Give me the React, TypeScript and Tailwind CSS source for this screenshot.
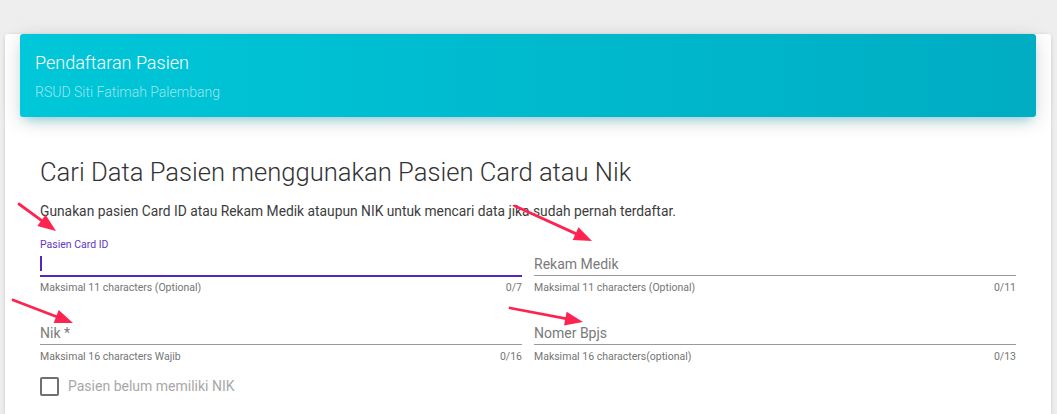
import React from "react";

type Field = {
  label: string;
  hint: string;
  counter: string;
  focused?: boolean;
};

const fields: Field[] = [
  { label: "Pasien Card ID", hint: "Maksimal 11 characters (Optional)", counter: "0/7", focused: true },
  { label: "Rekam Medik", hint: "Maksimal 11 characters (Optional)", counter: "0/11" },
  { label: "Nik *", hint: "Maksimal 16 characters Wajib", counter: "0/16" },
  { label: "Nomer Bpjs", hint: "Maksimal 16 characters(optional)", counter: "0/13" },
];

// annotation arrows: [tailX, tailY, tipX, tipY]
const arrows: [number, number, number, number][] = [
  [19, 204, 56, 231],
  [515, 206, 592, 241],
  [13, 300, 73, 323],
  [510, 308, 583, 322],
];

function Arrow({ a }: { a: [number, number, number, number] }) {
  const [x1, y1, x2, y2] = a;
  const dx = x2 - x1;
  const dy = y2 - y1;
  const len = Math.sqrt(dx * dx + dy * dy);
  const ux = dx / len;
  const uy = dy / len;
  const head = 18;
  const half = 7;
  const bx = x2 - ux * head;
  const by = y2 - uy * head;
  const p1 = `${bx - uy * half},${by + ux * half}`;
  const p2 = `${bx + uy * half},${by - ux * half}`;
  return (
    <g>
      <line x1={x1} y1={y1} x2={bx + ux * 2} y2={by + uy * 2} stroke="#fd2451" strokeWidth={2.8} strokeLinecap="round" />
      <polygon points={`${x2},${y2} ${p1} ${p2}`} fill="#fd2451" />
    </g>
  );
}

function TextField({ f }: { f: Field }) {
  return (
    <div className="flex flex-col h-[69px]">
      <div className="h-[17px] flex items-end pb-[3px]">
        {f.focused && <span className="text-[10.5px] leading-[12px] text-[#6236c6]">{f.label}</span>}
      </div>
      {f.focused ? (
        <div className="h-[23px] border-b-2 border-[#5128c0] flex items-center pb-[2px]">
          <span className="w-[2px] h-[15px] bg-[#5128c0]" />
        </div>
      ) : (
        <div className="h-[22px] border-b border-[#9a9a9a] flex items-center">
          <span className="text-[14px] text-[#7a7a7a]">{f.label}</span>
        </div>
      )}
      <div className={`flex justify-between text-[10.5px] leading-[12px] text-[#757575] ${f.focused ? "pt-[5px]" : "pt-[6px]"}`}>
        <span>{f.hint}</span>
        <span>{f.counter}</span>
      </div>
    </div>
  );
}

export default function App() {
  return (
    <div className="relative min-h-screen bg-[#eeeeee] pt-[54px] pl-[5px] pr-[6px] font-['Roboto',sans-serif]">
      <div className="bg-white rounded-[3px] shadow-[0_1px_4px_0_rgba(0,0,0,0.14)] pb-[20px]">
        <div className="mx-[15px] -mt-[20px] h-[83px] rounded-[3px] px-[15px] pt-[16px] bg-gradient-to-r from-[#00c7d9] to-[#00adc3] shadow-[0_4px_20px_0_rgba(0,0,0,0.14),0_7px_10px_-5px_rgba(0,188,212,0.4)]">
          <h4 className="text-[18px] leading-[25px] font-light text-white">Pendaftaran Pasien</h4>
          <p className="mt-[7px] text-[14px] leading-[20px] font-light text-white/60">RSUD Siti Fatimah Palembang</p>
        </div>

        <div className="px-[35px]">
          <h3 className="mt-[40px] text-[25.6px] leading-[31px] font-light text-[#333333]">
            Cari Data Pasien menggunakan Pasien Card atau Nik
          </h3>
          <p className="mt-[13px] text-[13.8px] leading-[20px] text-[#3c3c3c]">
            Gunakan pasien Card ID atau Rekam Medik ataupun NIK untuk mencari data jika sudah pernah terdaftar.
          </p>

          <div className="mt-[16px] grid grid-cols-2 gap-x-[12px]">
            {fields.map((f) => (
              <TextField key={f.label} f={f} />
            ))}
          </div>

          <label className="mt-[1px] flex items-center gap-[9px]">
            <span className="w-[19px] h-[19px] rounded-[2px] border-2 border-[#707070]" />
            <span className="text-[14px] text-[#a8a8a8]">Pasien belum memiliki NIK</span>
          </label>
        </div>
      </div>

      <svg className="absolute inset-0 pointer-events-none" width="1057" height="414">
        {arrows.map((a, i) => (
          <Arrow key={i} a={a} />
        ))}
      </svg>
    </div>
  );
}
